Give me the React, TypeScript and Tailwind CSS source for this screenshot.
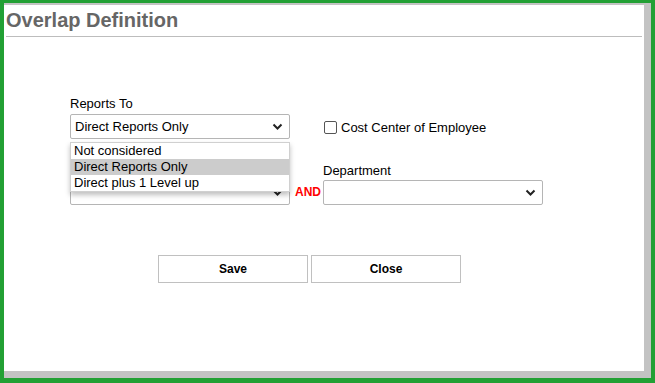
import React from "react";

const Chevron = () => (
  <svg width="11" height="7" viewBox="0 0 11 7" className="shrink-0">
    <polyline points="1.5,1.5 5.5,5.5 9.5,1.5" fill="none" stroke="#222" strokeWidth="2" />
  </svg>
);

function FakeSelect({ value }: { value?: string }) {
  return (
    <div className="flex h-[25px] w-[220px] items-center justify-between rounded-[2px] border border-[#b5b5b5] bg-white pl-[4px] pr-[6px] text-[13px] text-black">
      <span>{value}</span>
      <Chevron />
    </div>
  );
}

export default function App() {
  const options = ["Not considered", "Direct Reports Only", "Direct plus 1 Level up"];
  const selected = "Direct Reports Only";

  return (
    <div className="h-[383px] w-[655px] bg-[#22a034] pt-[3px] pl-[4px] pr-[4px] pb-[5px] font-['Liberation_Sans',Arial,sans-serif]">
      <div className="h-full w-full border-t-2 border-r-[7px] border-b-[7px] border-[#c3c3c3] bg-white">
        {/* title */}
        <div className="px-[2px] pt-[4px]">
          <div className="border-b border-[#bdbdbd] pb-[4px] text-[20px] font-bold leading-[23px] text-[#666666]">
            Overlap Definition
          </div>
        </div>

        {/* form */}
        <div className="mt-[59px] pl-[66px]">
          {/* row 1 */}
          <div className="flex gap-[34px]">
            <div className="relative">
              <div className="mb-[3px] text-[13px] leading-[15px] text-black">Reports To</div>
              <FakeSelect value={selected} />
              <div className="absolute left-0 top-[46px] z-10 w-[220px] border border-[#d0d0d0] bg-white text-[13px] leading-[16px] text-black shadow-[0_3px_5px_rgba(0,0,0,0.25)]">
                {options.map((o) => (
                  <div key={o} className={`pl-[3px] ${o === selected ? "bg-[#cccccc]" : ""}`}>
                    {o}
                  </div>
                ))}
              </div>
            </div>
            <label className="mt-[25px] flex h-[13px] items-center gap-[4px] text-[13px] text-black">
              <span className="block h-[13px] w-[13px] rounded-[2px] border border-[#555] bg-white" />
              Cost Center of Employee
            </label>
          </div>

          {/* row 2 */}
          <div className="mt-[24px] flex items-end">
            <div>
              <div className="mb-[2px] h-[15px] text-[13px] leading-[15px]">&nbsp;</div>
              <FakeSelect />
            </div>
            <span className="mb-[6px] ml-[5px] mr-[2px] text-[12px] font-bold leading-[14px] text-[#ff0000]">AND</span>
            <div>
              <div className="mb-[2px] text-[13px] leading-[15px] text-black">Department</div>
              <FakeSelect />
            </div>
          </div>

          {/* buttons */}
          <div className="ml-[88px] mt-[50px] flex gap-[3px]">
            <button className="h-[28px] w-[150px] border border-[#c0c0c0] bg-white text-[12px] font-bold text-black">
              Save
            </button>
            <button className="h-[28px] w-[150px] border border-[#c0c0c0] bg-white text-[12px] font-bold text-black">
              Close
            </button>
          </div>
        </div>
      </div>
    </div>
  );
}
